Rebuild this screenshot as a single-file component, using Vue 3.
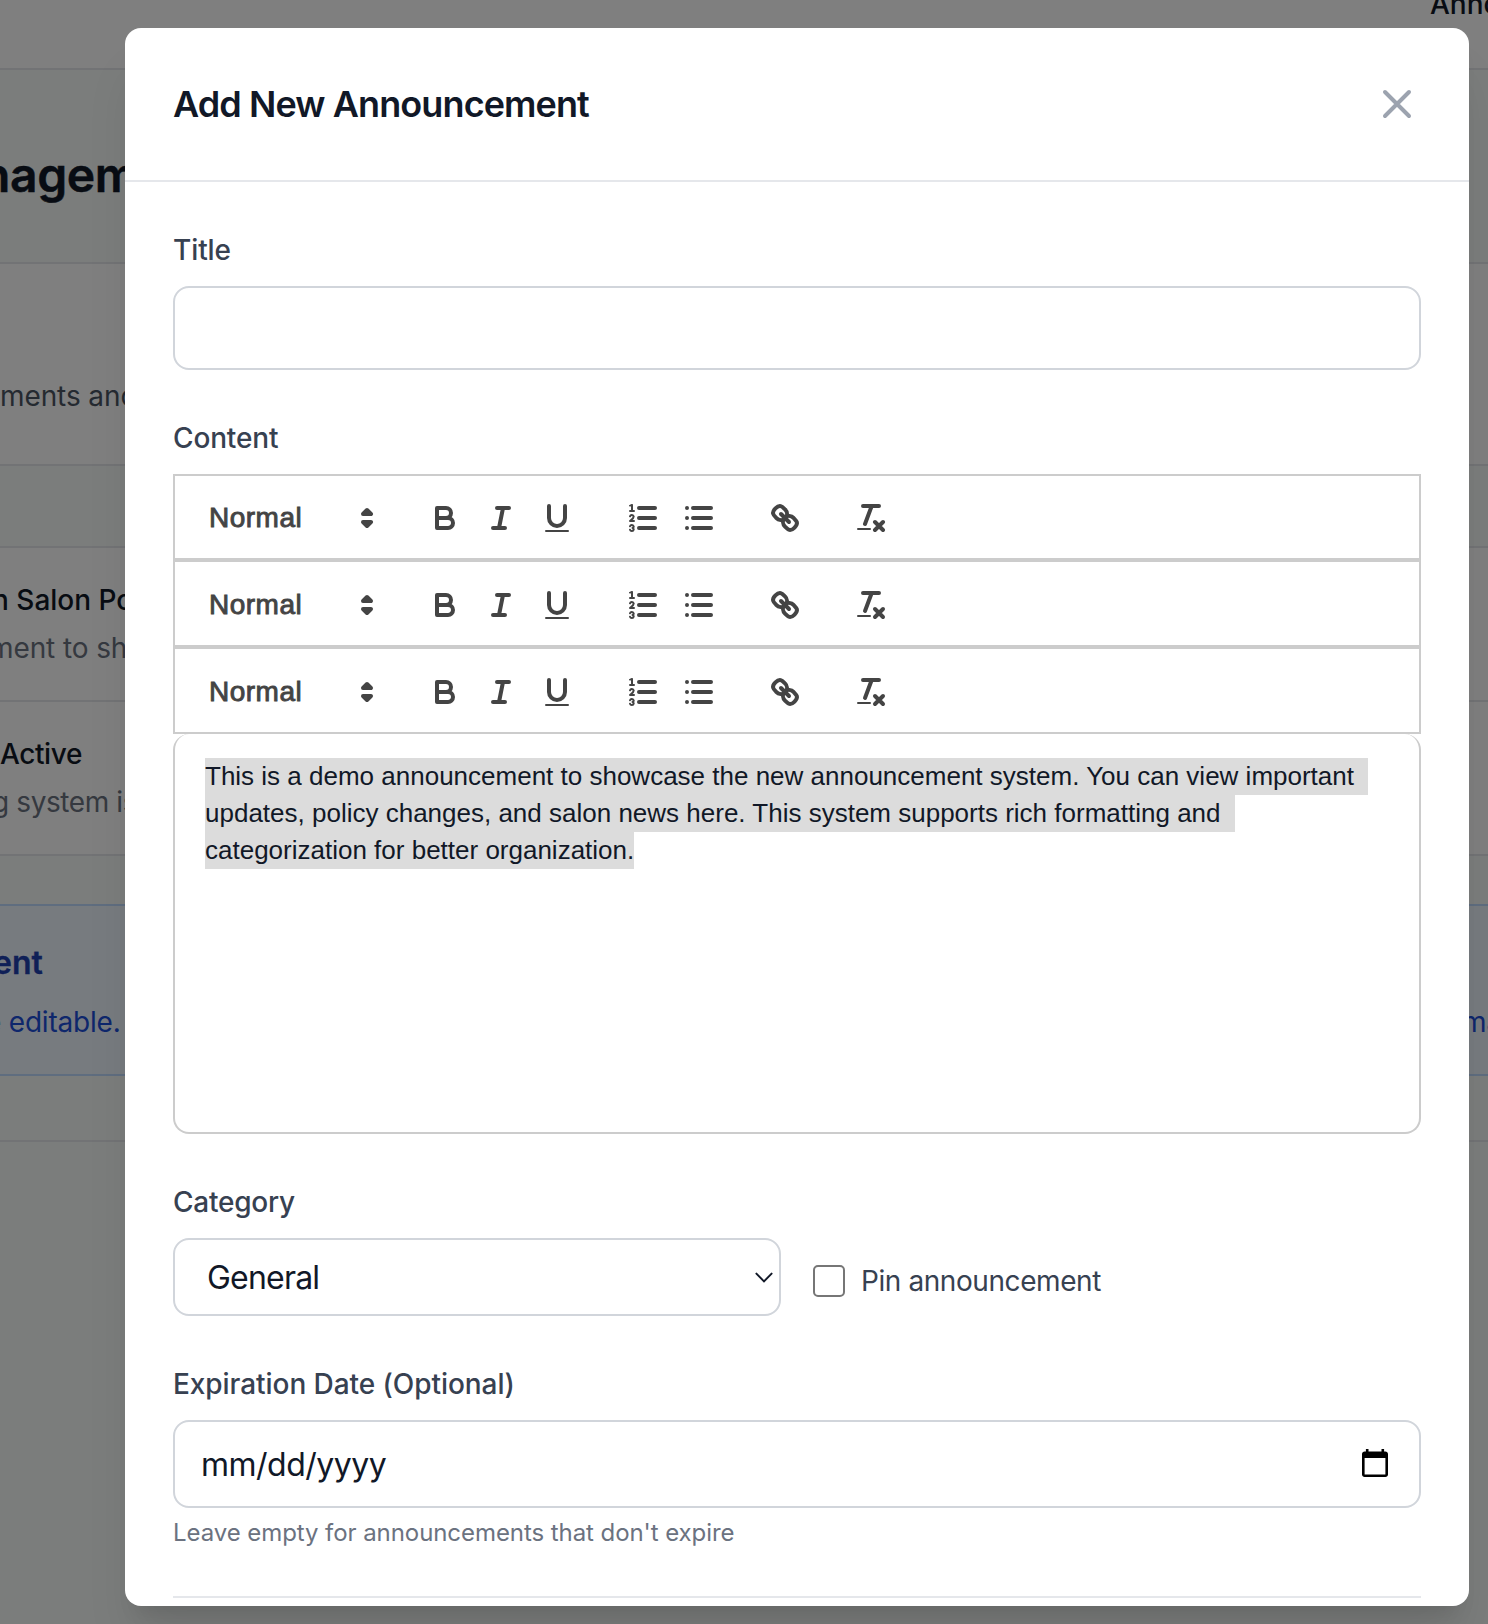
<script setup>
import { ref } from 'vue'

const title = ref('')
const toolbars = [1, 2, 3]

const groups = [
  ['bold', 'italic', 'underline'],
  ['ordered', 'bullet'],
  ['link'],
  ['clean'],
]

const icons = {
  bold: '<path d="M5,4H9.5A2.5,2.5,0,0,1,12,6.5v0A2.5,2.5,0,0,1,9.5,9H5V4Z"/><path d="M5,9h5.5A2.5,2.5,0,0,1,13,11.5v0A2.5,2.5,0,0,1,10.5,14H5V9Z"/>',
  italic: '<path d="M7,4H13M5,14H11M8,14L10,4"/>',
  underline: '<path d="M5,3V9a4.012,4.012,0,0,0,4,4H9a4.012,4.012,0,0,0,4-4V3"/><rect fill="#444" stroke="none" height="1" rx=".5" width="12" x="3" y="15"/>',
  ordered: '<path d="M7,4H15M7,9H15M7,14H15"/><path stroke-width="1" d="M2.5,5.5H4.5"/><path fill="#444" stroke="none" d="M3.5,6A0.5,0.5,0,0,1,3,5.5V3.085l-0.276.138A0.5,0.5,0,0,1,2.053,3c-0.124-.247-0.023-0.324.224-0.447l1-.5A0.5,0.5,0,0,1,4,2.5v3A0.5,0.5,0,0,1,3.5,6Z"/><path stroke-width="1" d="M4.5,10.5h-2c0-.234,1.85-1.076,1.85-2.234A0.959,0.959,0,0,0,2.5,8.156"/><path stroke-width="1" d="M2.5,14.846a0.959,0.959,0,0,0,1.85-.109A0.7,0.7,0,0,0,3.75,14a0.688,0.688,0,0,0,.6-0.736,0.959,0.959,0,0,0-1.85-.109"/>',
  bullet: '<path d="M6,4H15M6,9H15M6,14H15M3,4H3M3,9H3M3,14H3"/>',
  link: '<path d="M7,7L11,11"/><path d="M8.9,4.577a3.476,3.476,0,0,1,.36,4.679A3.476,3.476,0,0,1,4.577,8.9C3.185,7.5,2.035,6.4,4.217,4.217S7.5,3.185,8.9,4.577Z"/><path d="M13.423,9.1a3.476,3.476,0,0,0-4.679-.36,3.476,3.476,0,0,0,.36,4.679c1.392,1.392,2.5,2.542,4.679.36S14.815,10.5,13.423,9.1Z"/>',
  clean: '<path d="M5,3H13M6,12L9.35,3M11,11L15,15M15,11L11,15"/><rect fill="#444" stroke="none" height="1" rx=".5" width="7" x="2" y="14"/>',
}
</script>

<template>
  <div class="screen">
    <div class="page">
      <header class="topbar"><span class="crumb">Anno</span></header>
      <div class="heading"><span class="bg-h1">nagem</span></div>
      <div class="intro"><span class="bg-intro">ments and</span></div>
      <div class="strip"></div>
      <div class="item">
        <span class="bg-name n1">n Salon Po</span>
        <span class="bg-desc d1">ment to sh</span>
      </div>
      <div class="item">
        <span class="bg-name n2">Active</span>
        <span class="bg-desc d2">g system is</span>
      </div>
      <div class="gap"></div>
      <div class="notice">
        <span class="notice-title">ent</span>
        <div class="notice-row">
          <span class="notice-text">e editable.</span>
          <span class="notice-tail">ma</span>
        </div>
      </div>
      <div class="after"></div>
    </div>

    <div class="overlay">
      <section class="modal">
        <header class="modal-head">
          <h3>Add New Announcement</h3>
          <button class="close" type="button">
            <svg width="48" height="48" viewBox="0 0 24 24" fill="none" stroke="currentColor" stroke-width="2" stroke-linecap="round"><path d="M6 18L18 6M6 6l12 12" /></svg>
          </button>
        </header>

        <form class="form">
          <div class="field">
            <label class="label l-title">Title</label>
            <input v-model="title" class="box input" type="text" />
          </div>

          <div class="field">
            <label class="label l-content">Content</label>
            <div v-for="t in toolbars" :key="t" class="toolbar">
              <span class="picker">
                <span class="picker-label">Normal</span>
                <svg width="36" height="36" viewBox="0 0 18 18" class="ico"><path d="M7,11L9,13L11,11ZM7,7L9,5L11,7Z" /></svg>
              </span>
              <span v-for="(g, i) in groups" :key="i" class="group">
                <button v-for="name in g" :key="name" type="button" class="tool">
                  <svg width="36" height="36" viewBox="0 0 18 18" class="ico" v-html="icons[name]"></svg>
                </button>
              </span>
            </div>
            <div class="editor">
              <div class="line"><span class="sel pad">This is a demo announcement to showcase the new announcement system. You can view important</span></div>
              <div class="line"><span class="sel pad">updates, policy changes, and salon news here. This system supports rich formatting and</span></div>
              <div class="line"><span class="sel">categorization for better organization.</span></div>
            </div>
          </div>

          <div class="field columns">
            <div class="col">
              <label class="label l-cat">Category</label>
              <div class="box select">
                <span class="select-text">General</span>
                <svg width="18" height="12" viewBox="0 0 18 12" fill="none" stroke="#111827" stroke-width="2" stroke-linecap="round"><path d="M1.4 1.6L9 9.4L16.6 1.6" /></svg>
              </div>
            </div>
            <label class="check"><span class="tick"></span><span class="check-text">Pin announcement</span></label>
          </div>

          <div class="field">
            <label class="label l-exp">Expiration Date (Optional)</label>
            <div class="box date">
              <span class="date-text">mm/dd/yyyy</span>
              <svg class="calendar" width="26" height="28" viewBox="2 1 20 22" preserveAspectRatio="none"><path d="M20 3h-1V1h-2v2H7V1H5v2H4c-1.1 0-2 .9-2 2v16c0 1.1.9 2 2 2h16c1.1 0 2-.9 2-2V5c0-1.1-.9-2-2-2zm0 18H4V8h16v13z" /></svg>
            </div>
            <p class="help">Leave empty for announcements that don't expire</p>
          </div>
          <div class="actions"></div>
        </form>
      </section>
    </div>
  </div>
</template>

<style>
body { margin: 0; overflow: hidden; }
</style>

<style scoped>
* { box-sizing: border-box; }
.screen {
  position: relative; width: 1488px; height: 1624px; overflow: hidden;
  font-family: Inter, "Liberation Sans", sans-serif; color: #111827; background: #f7faf8;
}
.page { display: flex; flex-direction: column; white-space: nowrap; font-size: 28px; line-height: 40px; }
.topbar { height: 70px; background: #fff; border-bottom: 2px solid #e5e7eb; overflow: hidden; }
.crumb { display: block; margin: -16px 0 0 1430px; font-weight: 500; }
.heading { height: 194px; padding-top: 77px; border-bottom: 2px solid #e5e7eb; }
.bg-h1 { display: block; margin-left: -19px; font-size: 48px; font-weight: 600; line-height: 56px; letter-spacing: -.4px; -webkit-text-stroke: .5px; }
.intro { height: 202px; padding-top: 112px; background: #fff; border-bottom: 2px solid #e5e7eb; }
.bg-intro { display: block; letter-spacing: -.1px; color: #4b5563; }
.strip { height: 82px; border-bottom: 2px solid #e5e7eb; }
.item { height: 154px; padding-top: 32px; background: #fff; border-bottom: 2px solid #e5e7eb; display: flex; flex-direction: column; gap: 8px; }
.bg-name { font-weight: 500; }
.bg-desc { color: #6b7280; }
.n1 { margin-left: -8px; }
.n2 { letter-spacing: -.4px; }
.d1 { margin-left: -11px; letter-spacing: -.1px; }
.d2 { margin-left: -8px; letter-spacing: -.4px; }
.gap { height: 48px; }
.notice { height: 172px; padding-top: 37px; background: #eff6ff; border: solid #bfdbfe; border-width: 2px 0; color: #1e40af; }
.notice-title { display: block; font-size: 32px; font-weight: 600; line-height: 40px; margin-left: -7px; -webkit-text-stroke: .3px; }
.notice-row { display: flex; justify-content: space-between; margin-top: 19px; color: #1d4ed8; }
.notice-text { margin-left: -15px; letter-spacing: -.2px; }
.notice-tail { width: 26px; }
.after { height: 66px; border-bottom: 2px solid #e5e7eb; }

.overlay { position: absolute; inset: 0; padding: 28px 0 0 125px; background: rgba(0, 0, 0, .5); }
.modal {
  width: 1344px; height: 1578px; overflow: hidden; background: #fff; border-radius: 16px;
  box-shadow: 0 40px 50px -10px rgba(0, 0, 0, .1), 0 16px 20px -12px rgba(0, 0, 0, .1);
}
.modal-head { height: 154px; padding: 0 48px; display: flex; align-items: center; justify-content: space-between; border-bottom: 2px solid #e5e7eb; }
h3 { margin: 0; font-size: 36px; font-weight: 600; line-height: 56px; letter-spacing: -.9px; }
button { padding: 0; border: 0; background: none; font: inherit; }
.close { width: 48px; height: 48px; color: #9ca3af; display: flex; }
.form { padding: 48px; display: flex; flex-direction: column; gap: 48px; }
.field { display: flex; flex-direction: column; }
.label { height: 40px; margin-bottom: 16px; font-size: 28px; font-weight: 500; line-height: 41px; color: #374151; white-space: nowrap; }
.l-title { letter-spacing: -.1px; }
.l-content { letter-spacing: -.15px; }
.l-cat { letter-spacing: -.25px; }
.l-exp { letter-spacing: -.06px; }
.box { border: 2px solid #d1d5db; border-radius: 16px; background: #fff; }
.input { width: 100%; height: 84px; padding: 0 24px; font: 32px Inter, sans-serif; outline: none; }

.toolbar { height: 87px; padding: 25px 0 0 34px; display: flex; align-items: flex-start; border: 2px solid #ccc; }
.label + .toolbar { height: 86px; padding-top: 24px; }
.picker { width: 176px; margin-right: 32px; height: 36px; display: flex; justify-content: space-between; align-items: center; }
.picker-label { font: 28px/36px "Liberation Sans", Arial, sans-serif; letter-spacing: .5px; color: #444; -webkit-text-stroke: .9px #444; }
.ico { display: block; fill: none; stroke: #444; stroke-width: 2; stroke-linecap: round; stroke-linejoin: round; }
.group { display: flex; margin-right: 30px; }
.tool { width: 56px; height: 36px; padding: 0 10px; }
.editor { height: 400px; padding: 24px 30px; border: 2px solid #ccc; border-top: 0; border-radius: 16px; font: 26px/37px "Liberation Sans", Arial, sans-serif; white-space: nowrap; }
.line { height: 37px; display: flex; }
.sel { background: #dcdcdc; }
.pad { padding-right: 14px; }

.columns { flex-direction: row; gap: 32px; }
.col { width: 608px; display: flex; flex-direction: column; }
.select { height: 78px; padding: 2px 6px 0 32px; display: flex; align-items: center; justify-content: space-between; font-size: 32px; line-height: 48px; }
.select-text { letter-spacing: -.8px; }
.check { display: flex; align-items: center; gap: 16px; height: 40px; margin-top: 79px; font-size: 28px; line-height: 40px; color: #374151; white-space: nowrap; }
.check-text { letter-spacing: -.42px; }
.tick { width: 32px; height: 32px; border: 2px solid #767676; border-radius: 5px; }
.date { height: 88px; padding: 0 31px 0 26px; display: flex; align-items: center; justify-content: space-between; font-size: 32px; line-height: 48px; }
.date-text { padding-top: 2px; letter-spacing: -.5px; }
.calendar { margin-bottom: 2px; }
.help { margin: 8px 0 0; height: 32px; font-size: 24px; line-height: 34px; letter-spacing: -.07px; color: #6b7280; white-space: nowrap; }
.actions { border-top: 2px solid #e5e7eb; }
</style>
